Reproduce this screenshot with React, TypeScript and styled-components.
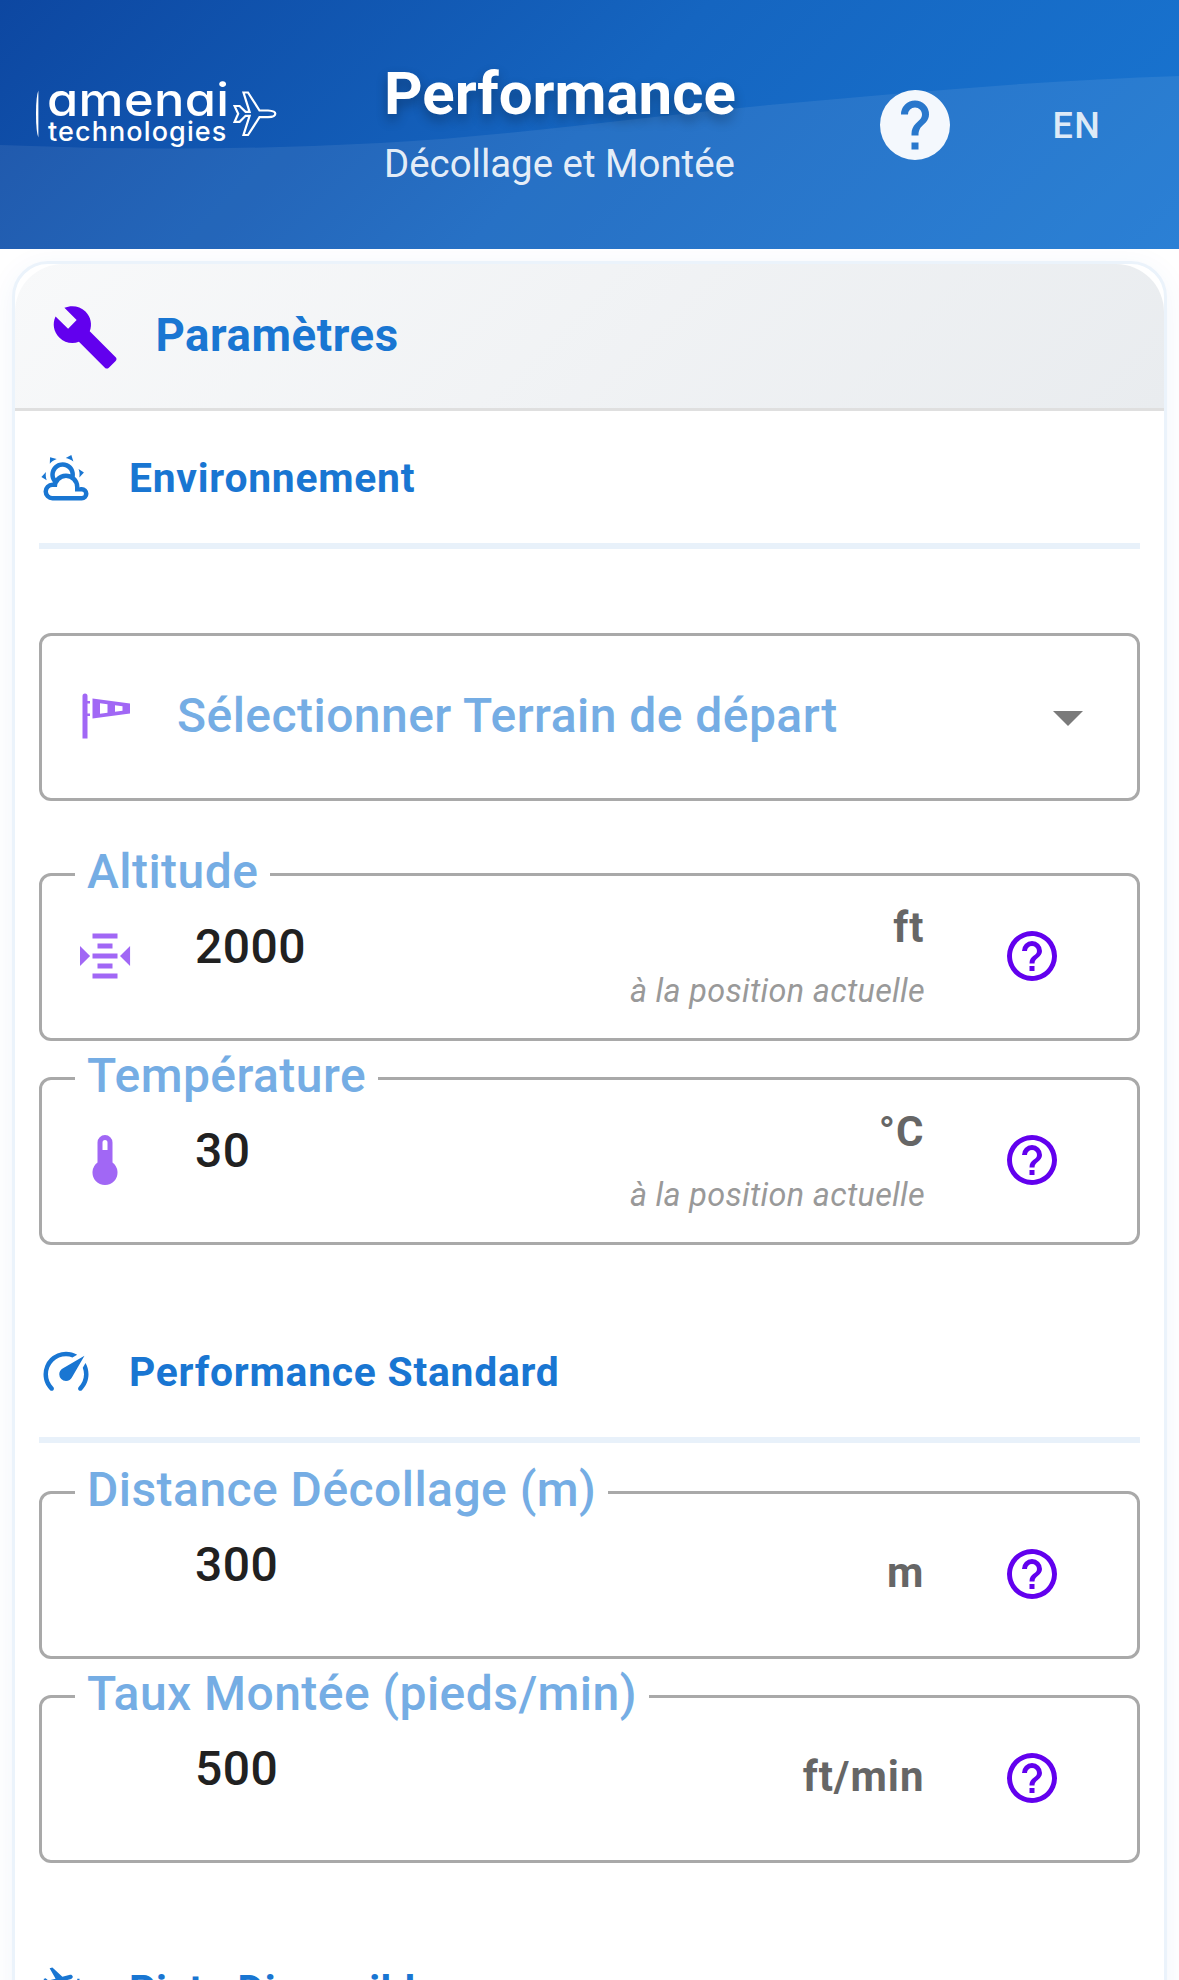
import React from 'react';
import styled, { createGlobalStyle } from 'styled-components';

const GlobalStyle = createGlobalStyle`
  *, *::before, *::after { box-sizing: border-box; }
  html, body { margin: 0; padding: 0; background: #fff; }
  body { height: 1980px; overflow: hidden; font-family: Roboto, "Liberation Sans", sans-serif; }
  h1, h2, h3, p { margin: 0; }
`;

/* Material Design icon outlines on a 24-unit grid */
const icons = {
  help: 'M15.07,11.25L14.17,12.17C13.45,12.89 13,13.5 13,15H11V14.5C11,13.39 11.45,12.39 12.17,11.67L13.41,10.41C13.78,10.05 14,9.55 14,9C14,7.89 13.1,7 12,7A2,2 0 0,0 10,9H8A4,4 0 0,1 12,5A4,4 0 0,1 16,9C16,9.88 15.64,10.67 15.07,11.25M13,19H11V17H13M12,2A10,10 0 0,0 2,12A10,10 0 0,0 12,22A10,10 0 0,0 22,12C22,6.47 17.5,2 12,2Z',
  helpOutline: 'M11,18H13V16H11V18M12,2A10,10 0 0,0 2,12A10,10 0 0,0 12,22A10,10 0 0,0 22,12A10,10 0 0,0 12,2M12,20C7.59,20 4,16.41 4,12C4,7.59 7.59,4 12,4C16.41,4 20,7.59 20,12C20,16.41 16.41,20 12,20M12,6A4,4 0 0,0 8,10H10A2,2 0 0,1 12,8A2,2 0 0,1 14,10C14,12 11,11.75 11,15H13C13,12.75 16,12.5 16,10A4,4 0 0,0 12,6Z',
  wrench: 'M22.7,19L13.6,9.9C14.5,7.6 14,4.9 12.1,3C10.1,1 7.1,0.6 4.7,1.7L9,6L6,9L1.6,4.7C0.4,7.1 0.9,10.1 2.9,12.1C4.8,14 7.5,14.5 9.8,13.6L18.9,22.7C19.3,23.1 19.9,23.1 20.3,22.7L22.6,20.4C23.1,20 23.1,19.3 22.7,19Z',
  weather: 'M12.74,5.47C15.1,6.5 16.35,9.03 15.92,11.46C17.19,12.56 18,14.19 18,16V16.17C18.31,16.06 18.65,16 19,16A3,3 0 0,1 22,19A3,3 0 0,1 19,22H6A4,4 0 0,1 2,18A4,4 0 0,1 6,14H6.27C5,12.45 4.6,10.24 5.5,8.26C6.72,5.5 9.97,4.24 12.74,5.47M11.93,7.3C10.16,6.5 8.09,7.31 7.31,9.07C6.85,10.09 6.93,11.22 7.41,12.13C8.5,10.83 10.16,10 12,10C12.7,10 13.38,10.12 14,10.34C13.94,9.06 13.18,7.86 11.93,7.3M13.55,3.64C13,3.4 12.45,3.23 11.88,3.12L14.37,1.82L15.27,4.71C14.76,4.29 14.19,3.93 13.55,3.64M6.09,4.44C5.6,4.79 5.17,5.19 4.8,5.63L4.91,2.82L7.87,3.5C7.25,3.71 6.65,4.03 6.09,4.44M18,9.71C17.91,9.12 17.78,8.55 17.59,8L19.97,9.5L17.92,11.73C18.03,11.08 18.05,10.4 18,9.71M3.04,11.3C3.11,11.9 3.24,12.47 3.43,13L1.06,11.5L3.1,9.28C2.97,9.93 2.97,10.61 3.04,11.3M19,18H16V16A4,4 0 0,0 12,12A4,4 0 0,0 8,16H6A2,2 0 0,0 4,18A2,2 0 0,0 6,20H19A1,1 0 0,0 20,19A1,1 0 0,0 19,18Z',
  windsock: 'M7,5V13L22,11V7L7,5M10,6.91L13,7.31V10.7L10,11.09V6.91M16,7.71L19,8.11V9.9L16,10.3V7.71M5,10V11H6V12H5V21H3V4A1,1 0 0,1 4,3A1,1 0 0,1 5,4V6H6V7H5V10Z',
  altimeter: 'M7,3V5H17V3H7M9,7V9H15V7H9M2,7.96V16.04L6.03,12L2,7.96M22.03,7.96L18,12L22.03,16.04V7.96M7,11V13H17V11H7M9,15V17H15V15H9M7,19V21H17V19H7Z',
  thermometer: 'M15 13V5A3 3 0 0 0 9 5V13A5 5 0 1 0 15 13M12 4A1 1 0 0 1 13 5V8H11V5A1 1 0 0 1 12 4Z',
  speed: 'M12,16A3,3 0 0,1 9,13C9,11.88 9.61,10.9 10.5,10.39L20.21,4.77L14.68,14.35C14.18,15.33 13.17,16 12,16M12,3C13.81,3 15.5,3.5 16.97,4.32L14.87,5.53C14,5.19 13,5 12,5A8,8 0 0,0 4,13C4,15.21 4.89,17.21 6.34,18.65H6.35C6.74,19.04 6.74,19.67 6.35,20.06C5.96,20.45 5.32,20.45 4.93,20.07V20.07C3.12,18.26 2,15.76 2,13A10,10 0 0,1 12,3M22,13C22,15.76 20.88,18.26 19.07,20.07V20.07C18.68,20.45 18.05,20.45 17.66,20.06C17.27,19.67 17.27,19.04 17.66,18.65V18.65C19.11,17.2 20,15.21 20,13C20,12 19.81,11 19.46,10.1L20.67,8C21.5,9.5 22,11.18 22,13Z',
  airport: 'M14.97,5.92C14.83,5.41 14.3,5.1 13.79,5.24L10.39,6.15L5.95,2.03L4.72,2.36L7.38,6.95L4.19,7.8L2.93,6.82L2,7.07L3.66,9.95L14.28,7.11C14.8,6.96 15.1,6.43 14.97,5.92M21,10L20,12H15L14,10L15,9H17V7H18V9H20L21,10M22,20V22H2V20H15V13H20V20H22Z',
  caret: 'M7,10L12,15L17,10H7Z',
};
type IconName = keyof typeof icons;

const Glyph = styled.svg<{ $color: string }>`
  display: block;
  flex: none;
  fill: ${(p) => p.$color};
`;
const Icon = ({ name, size, color }: { name: IconName; size: number; color: string }) => (
  <Glyph viewBox="0 0 24 24" width={size} height={size} $color={color}>
    <path fillRule="evenodd" d={icons[name]} />
  </Glyph>
);

const Header = styled.header`
  position: relative;
  height: 249px;
  padding-left: 36px;
  display: grid;
  grid-template-columns: 348px 489px 180px 1fr;
  align-items: center;
  background: linear-gradient(135deg, #0d47a1 0%, #1565c0 50%, #1976d2 100%);
`;
const Wave = styled.svg`
  position: absolute;
  inset: 0;
  width: 100%;
  height: 100%;
  fill: rgba(255, 255, 255, 0.08);
`;
const Logo = styled.div`
  position: relative;
  align-self: start;
  display: flex;
  align-items: center;
  height: 72px;
  margin-top: 76px;
  color: #fff;
`;
const LogoMark = styled.svg`
  flex: none;
  display: block;
  margin-top: 4px;
  fill: #fff;
`;
const LogoText = styled.div`
  width: 184px;
  margin-left: 8px;
  font-family: Inter, sans-serif;
  font-weight: 450;
  font-feature-settings: "cv11" 1;
  white-space: nowrap;
`;
const LogoName = styled.div`
  font-size: 46px;
  line-height: 40px;
  letter-spacing: 0.3px;
  margin-left: -1px;
  transform: scaleX(1.1);
  transform-origin: left;
`;
const LogoTag = styled.div`
  font-size: 27px;
  line-height: 26px;
  letter-spacing: 1.1px;
`;
const LogoPlane = styled.svg`
  flex: none;
  display: block;
  fill: none;
  stroke: #fff;
  stroke-width: 2.2;
  margin: 4px 0 0 1px;
`;
const Titles = styled.div`
  position: relative;
  padding-top: 7px;
`;
const Title = styled.h1`
  font-size: 60px;
  line-height: 72px;
  font-weight: 700;
  color: #fff;
  text-shadow: 0 6px 12px rgba(0, 0, 0, 0.3);
`;
const Subtitle = styled.p`
  margin-top: -1px;
  padding-bottom: 1px;
  font-size: 38.4px;
  line-height: 69px;
  color: rgba(255, 255, 255, 0.9);
`;
const HelpButton = styled.div`
  position: relative;
`;
const Language = styled.div`
  position: relative;
  padding-top: 2px;
  margin-left: -0.5px;
  font-size: 36px;
  line-height: 42px;
  font-weight: 500;
  letter-spacing: 1.5px;
  color: rgba(255, 255, 255, 0.85);
`;

const Card = styled.main`
  margin: 12px 12px 0;
  height: 1800px;
  border: 3px solid #ebf3fb;
  border-radius: 36px;
  background: #fff;
  box-shadow: 0 6px 30px rgba(20, 80, 180, 0.06);
`;
const CardHeader = styled.div`
  display: flex;
  align-items: center;
  gap: 36px;
  height: 147px;
  padding: 0 0 0 36px;
  border-bottom: 3px solid #dfdfdf;
  border-radius: 48px 48px 0 0;
  background: linear-gradient(135deg, #f8f9fa 0%, #e9ecef 100%);
`;
const HeaderIcon = styled.div`
  padding-top: 2px;
`;
const CardTitle = styled.h2`
  font-size: 45.6px;
  line-height: 60px;
  font-weight: 700;
  letter-spacing: 0.55px;
  color: #1976d2;
`;
const Sections = styled.div`
  display: flex;
  flex-direction: column;
  gap: 100px;
  padding: 40px 24px 0;
`;
const SectionTitle = styled.h3<{ $gap: number }>`
  display: flex;
  align-items: center;
  gap: 36px;
  height: 98px;
  padding-bottom: 38px;
  border-bottom: 6px solid #e8f1fa;
  margin-bottom: ${(p) => p.$gap}px;
`;
const SectionText = styled.span`
  font-size: 40.8px;
  line-height: 54px;
  font-weight: 700;
  letter-spacing: 0.76px;
  color: #1976d2;
`;
const Fields = styled.div`
  display: flex;
  flex-direction: column;
  gap: 36px;
`;
const FieldBox = styled.div`
  position: relative;
  display: flex;
  align-items: center;
  height: 168px;
  border: 3px solid #a9a9a9;
  border-radius: 12px;
`;
const SelectBox = styled(FieldBox)`
  padding: 0 33px;
  margin-bottom: 36px;
`;
const InputBox = styled(FieldBox)`
  padding: 0 75px 0 33px;
`;
const IconSlot = styled.div`
  width: 60px;
  height: 63px;
`;
const Placeholder = styled.div`
  flex: 1;
  padding: 0 0 3px 42px;
  font-size: 48px;
  line-height: 60px;
  font-weight: 500;
  letter-spacing: 0.45px;
  color: #75ade4;
`;
const Label = styled.label`
  position: absolute;
  top: -28px;
  left: 33px;
  padding: 0 12px;
  background: #fff;
  font-size: 48px;
  line-height: 48px;
  font-weight: 500;
  letter-spacing: 0.45px;
  white-space: nowrap;
  color: #75ade4;
`;
const Value = styled.div`
  flex: 1;
  padding: 0 0 21px 60px;
  font-size: 48px;
  line-height: 60px;
  font-weight: 500;
  letter-spacing: 0.45px;
  color: #212121;
`;
const Suffix = styled.div`
  padding: 0 77px 5px 0;
  text-align: right;
`;
const Unit = styled.div`
  padding-right: 0.5px;
  font-size: 42px;
  line-height: 73px;
  font-weight: 700;
  letter-spacing: 1px;
  color: #666;
`;
const Hint = styled.div`
  padding-top: 1px;
  font-size: 32.4px;
  line-height: 53px;
  font-style: italic;
  letter-spacing: 0.32px;
  color: #999;
`;

interface FieldProps {
  label: string;
  value: string;
  unit: string;
  icon?: IconName;
  hint?: string;
}
const Field = ({ label, value, unit, icon, hint }: FieldProps) => (
  <InputBox>
    <Label>{label}</Label>
    <IconSlot>{icon && <Icon name={icon} size={60} color="#a167f5" />}</IconSlot>
    <Value>{value}</Value>
    <Suffix>
      <Unit>{unit}</Unit>
      {hint && <Hint>{hint}</Hint>}
    </Suffix>
    <IconSlot>
      <Icon name="helpOutline" size={60} color="#6200ee" />
    </IconSlot>
  </InputBox>
);

const SectionHeading = ({ icon, text, gap }: { icon: IconName; text: string; gap: number }) => (
  <SectionTitle $gap={gap}>
    <Icon name={icon} size={54} color="#1976d2" />
    <SectionText>{text}</SectionText>
  </SectionTitle>
);

export default function App() {
  return (
    <>
      <GlobalStyle />
      <Header>
        <Wave viewBox="0 0 1179 249" preserveAspectRatio="none">
          <path d="M0,145 Q190,153 380,143 C513,136 647,116 780,104 C913,92 1046,80 1179,76 V249 H0Z" />
        </Wave>
        <Logo>
          <LogoMark width="4" height="48" viewBox="0 0 4 48">
            <path d="M2.4,0.5 Q0,6 0,24 Q0,42 2.4,47.5Z" />
          </LogoMark>
          <LogoText>
            <LogoName>amenai</LogoName>
            <LogoTag>technologies</LogoTag>
          </LogoText>
          <LogoPlane width="44" height="48" viewBox="0 0 44 48">
            <path d="M10.5,2.5 H15 L26.5,20.5 H35 Q42.3,20.8 42.3,23.7 Q42.3,26.8 35,27.2 H26.5 L15,45 H10.5 L16.6,25.8 H12.6 L6.6,31.8 H1.6 L5.2,23.7 L1.6,16 H6.6 L12.6,21.8 H16.6 Z" />
          </LogoPlane>
        </Logo>
        <Titles>
          <Title>Performance</Title>
          <Subtitle>Décollage et Montée</Subtitle>
        </Titles>
        <HelpButton>
          <Icon name="help" size={84} color="rgba(255, 255, 255, 0.95)" />
        </HelpButton>
        <Language>EN</Language>
      </Header>
      <Card>
        <CardHeader>
          <HeaderIcon>
            <Icon name="wrench" size={68.4} color="#6200ee" />
          </HeaderIcon>
          <CardTitle>Paramètres</CardTitle>
        </CardHeader>
        <Sections>
          <section>
            <SectionHeading icon="weather" text="Environnement" gap={84} />
            <Fields>
              <SelectBox>
                <IconSlot>
                  <Icon name="windsock" size={60} color="#a167f5" />
                </IconSlot>
                <Placeholder>Sélectionner Terrain de départ</Placeholder>
                <Icon name="caret" size={72} color="#7a7a7a" />
              </SelectBox>
              <Field label="Altitude" value="2000" unit="ft" icon="altimeter" hint="à la position actuelle" />
              <Field label="Température" value="30" unit="°C" icon="thermometer" hint="à la position actuelle" />
            </Fields>
          </section>
          <section>
            <SectionHeading icon="speed" text="Performance Standard" gap={48} />
            <Fields>
              <Field label="Distance Décollage (m)" value="300" unit="m" />
              <Field label="Taux Montée (pieds/min)" value="500" unit="ft/min" />
            </Fields>
          </section>
          <section>
            <SectionHeading icon="airport" text="Piste Disponible" gap={48} />
          </section>
        </Sections>
      </Card>
    </>
  );
}
